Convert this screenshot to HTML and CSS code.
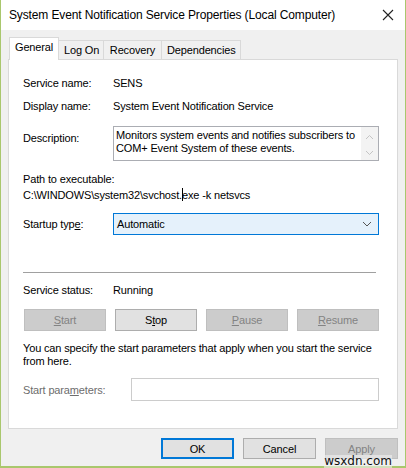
FILE: index.html
```html
<!DOCTYPE html>
<html>
<head>
<meta charset="utf-8">
<link rel="stylesheet" href="styles.css">
</head>
<body>
<div class="window">
  <div class="titlebar">
    <span class="title">System Event Notification Service Properties (Local Computer)</span>
    <svg class="close" width="12" height="12" viewBox="0 0 12 12"><path d="M1 1 L11 11 M11 1 L1 11" stroke="#222" stroke-width="1.1" fill="none"/></svg>
  </div>
  <div class="client">
    <div class="tabs">
      <div class="tab selected">General</div>
      <div class="tab">Log On</div>
      <div class="tab">Recovery</div>
      <div class="tab">Dependencies</div>
    </div>
    <div class="panel">
      <div class="row r-name"><span class="label">Service name:</span><span>SENS</span></div>
      <div class="row r-display"><span class="label">Display name:</span><span>System Event Notification Service</span></div>
      <div class="row r-desc">
        <span class="label desc-label">Description:</span>
        <div class="textbox">
          <div class="desc-text">Monitors system events and notifies subscribers to COM+ Event System of these events.</div>
          <div class="scroll">
            <svg width="9" height="6" viewBox="0 0 9 6"><path d="M1 5 L4.5 1.5 L8 5" stroke="#c4c4c4" fill="none"/></svg>
            <svg width="9" height="6" viewBox="0 0 9 6"><path d="M1 1 L4.5 4.5 L8 1" stroke="#c4c4c4" fill="none"/></svg>
          </div>
        </div>
      </div>
      <div class="path-label">Path to executable:</div>
      <div class="path-value">C:\WINDOWS\system32\svchost.<span class="caret"></span>exe -k netsvcs</div>
      <div class="row r-startup">
        <span class="label">Startup typ<u>e</u>:</span>
        <div class="combo">
          <span>Automatic</span>
          <svg width="10" height="6" viewBox="0 0 10 6"><path d="M1 1 L5 5 L9 1" stroke="#555" fill="none"/></svg>
        </div>
      </div>
      <div class="separator"></div>
      <div class="row r-status"><span class="label">Service status:</span><span>Running</span></div>
      <div class="svc-buttons">
        <div class="btn disabled"><u>S</u>tart</div>
        <div class="btn">S<u>t</u>op</div>
        <div class="btn disabled"><u>P</u>ause</div>
        <div class="btn disabled"><u>R</u>esume</div>
      </div>
      <div class="hint">You can specify the start parameters that apply when you start the service from here.</div>
      <div class="row r-params">
        <span class="label params-label">Start para<u>m</u>eters:</span>
        <div class="param-input"></div>
      </div>
    </div>
    <div class="footer">
      <div class="btn dlg default">OK</div>
      <div class="btn dlg">Cancel</div>
      <div class="btn dlg disabled">Apply</div>
    </div>
  </div>
  <div class="watermark">wsxdn.com</div>
</div>
</body>
</html>
```
FILE: styles.css
```css
html, body {
  margin: 0;
  padding: 0;
}
body {
  width: 406px;
  height: 468px;
  overflow: hidden;
  font-family: "Liberation Sans", Arial, sans-serif;
  font-size: 11px;
  letter-spacing: -0.15px;
  color: #000;
}
.window {
  position: relative;
  box-sizing: border-box;
  width: 406px;
  height: 468px;
  border: 1px solid #a9c76d;
  border-top: none;
  border-bottom-width: 2px;
  background: #f0f0f0;
}
.titlebar {
  height: 30px;
  background: #fff;
  display: flex;
  align-items: center;
  justify-content: space-between;
  padding: 0 11px 0 8px;
}
.title {
  font-size: 12px;
  letter-spacing: -0.13px;
  color: #000;
}
.close {
  display: block;
}
.client {
  padding: 8px 7px 0 7px;
}
.tabs {
  display: flex;
  align-items: flex-end;
  height: 21px;
  padding-left: 2px;
  position: relative;
  z-index: 1;
}
.tab {
  box-sizing: border-box;
  height: 19px;
  line-height: 18px;
  padding: 0 5px;
  white-space: nowrap;
  text-align: center;
  border: 1px solid #d9d9d9;
  border-bottom: none;
  border-left: none;
  background: #f0f0f0;
}
.tab.selected {
  height: 23px;
  line-height: 19px;
  margin-bottom: -1px;
  border-left: 1px solid #d9d9d9;
  background: #fff;
  width: 50px;
  margin-left: -1px;
}
.tabs .tab:nth-child(2) { width: 45px; }
.tabs .tab:nth-child(3) { width: 58px; }
.tabs .tab:nth-child(4) { width: 79px; }
.panel {
  box-sizing: border-box;
  height: 370px;
  background: #fff;
  border: 1px solid #d9d9d9;
  padding: 0 18px 0 14px;
}
.row {
  display: flex;
  align-items: center;
}
.label {
  width: 90px;
  flex: none;
}
.r-name { margin-top: 16px; line-height: 15px; }
.r-display { margin-top: 8px; line-height: 15px; }
.r-desc { margin-top: 12px; align-items: flex-start; }
.desc-label { padding-top: 5px; line-height: 15px; }
.textbox {
  box-sizing: border-box;
  width: 266px;
  height: 35px;
  border: 1px solid #abadb3;
  display: flex;
  justify-content: space-between;
}
.desc-text {
  padding: 2px 0 0 2px;
  line-height: 13px;
  width: 240px;
}
.scroll {
  width: 17px;
  background: #f3f3f3;
  display: flex;
  flex-direction: column;
  justify-content: space-between;
  align-items: center;
  padding: 7px 0 4px;
  box-sizing: border-box;
}
.scroll svg { display: block; }
.path-label {
  margin-top: 11px;
  line-height: 15px;
}
.path-value {
  margin-top: 1px;
  line-height: 15px;
}
.caret {
  display: inline-block;
  width: 1px;
  height: 13px;
  background: #000;
  vertical-align: -2px;
  margin-right: -1px;
}
.r-startup { margin-top: 10px; }
.combo {
  box-sizing: border-box;
  width: 266px;
  height: 22px;
  border: 1px solid #0078d7;
  background: #e5f1fb;
  display: flex;
  align-items: center;
  justify-content: space-between;
  padding: 0 6px 0 3px;
}
.combo svg { display: block; }
.separator {
  margin-top: 37px;
  width: 353px;
  height: 1px;
  background: #a0a0a0;
}
.r-status { margin-top: 10px; line-height: 15px; }
.svc-buttons {
  margin-top: 11px;
  margin-left: 1px;
  width: 355px;
  display: grid;
  grid-template-columns: repeat(4, 1fr);
  column-gap: 9px;
}
.btn {
  box-sizing: border-box;
  height: 22px;
  border: 1px solid #adadad;
  background: #e1e1e1;
  display: flex;
  align-items: center;
  justify-content: center;
}
.btn.disabled {
  background: #cccccc;
  border-color: #bfbfbf;
  color: #838383;
}
.hint {
  margin-top: 11px;
  line-height: 13px;
  width: 360px;
}
.r-params { margin-top: 10px; }
.params-label {
  width: 108px;
  color: #6d6d6d;
}
.param-input {
  box-sizing: border-box;
  width: 248px;
  height: 23px;
  border: 1px solid #cccccc;
}
.footer {
  display: flex;
  justify-content: flex-end;
  gap: 9px;
  margin-top: 9px;
}
.btn.dlg {
  width: 73px;
  height: 21px;
}
.btn.default {
  border: 2px solid #0078d7;
}
.watermark {
  position: absolute;
  right: 13px;
  bottom: -2px;
  font-family: "DejaVu Sans", sans-serif;
  font-size: 12px;
  letter-spacing: 0;
  line-height: 13px;
  color: #111;
  background: rgba(240,240,240,0.6);
}
```
